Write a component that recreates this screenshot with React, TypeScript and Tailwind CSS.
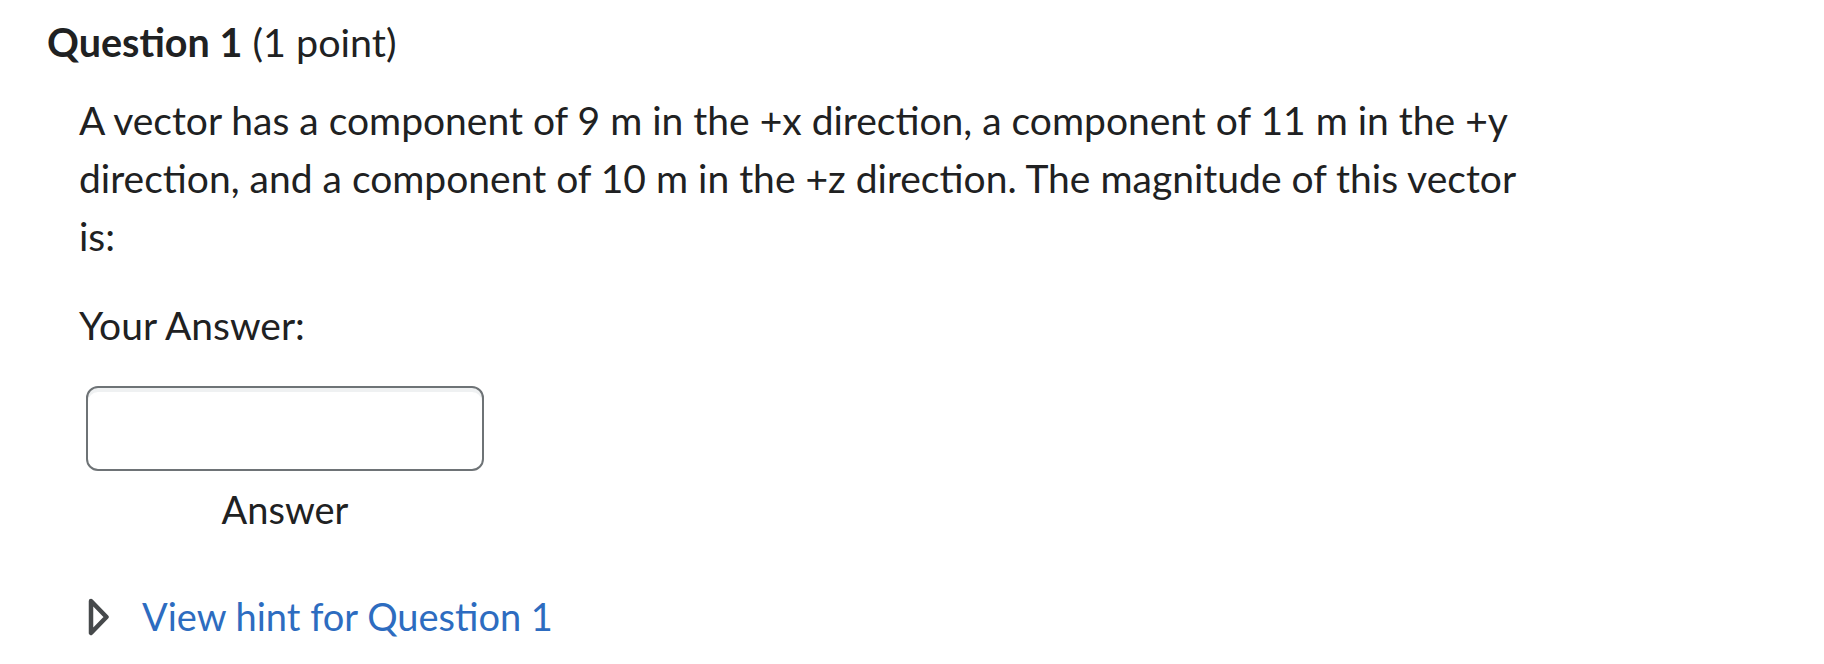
export default function App() {
  return (
    <div className="w-full h-[664px] bg-white text-[#202122] font-['Lato','Liberation_Sans',sans-serif] pl-[47px] pt-[18px]">
      {/* Question heading */}
      <h2 className="text-[39.5px] leading-[1.2] m-0">
        <span className="font-bold">Question 1</span> <span className="font-normal">(1 point)</span>
      </h2>

      <div className="pl-[32px]">
        {/* Question text */}
        <p className="mt-[26px] w-[1455px] text-[39px] leading-[58px]">
          A vector has a component of 9 m in the +x direction, a component of 11 m in the +y direction, and a
          component of 10 m in the +z direction. The magnitude of this vector is:
        </p>

        <div className="mt-[31px] text-[39px] leading-[58px]">Your Answer:</div>

        {/* Answer field */}
        <div className="mt-[32px] ml-[7px] w-[398px]">
          <input
            type="text"
            aria-label="Answer"
            className="block w-[398px] h-[85px] rounded-[12px] border-2 border-[#6e7376] bg-white shadow-[inset_0_4px_0_0_rgba(177,185,190,0.2)] outline-none"
          />
          <div className="mt-[16px] text-center text-[38px] leading-[1.2]">Answer</div>
        </div>

        {/* Hint toggle */}
        <div className="mt-[61px] flex items-center">
          <svg width="22" height="38" viewBox="0 0 22 38" className="ml-[9px] shrink-0" aria-hidden="true">
            <path d="M3 3 L18.5 19 L3 35 Z" fill="none" stroke="#46494b" strokeWidth="4.5" strokeLinejoin="round" />
          </svg>
          <a href="#" className="ml-[32px] text-[38px] leading-[1.2] text-[#2d6cc0] no-underline">
            View hint for Question 1
          </a>
        </div>
      </div>
    </div>
  );
}
